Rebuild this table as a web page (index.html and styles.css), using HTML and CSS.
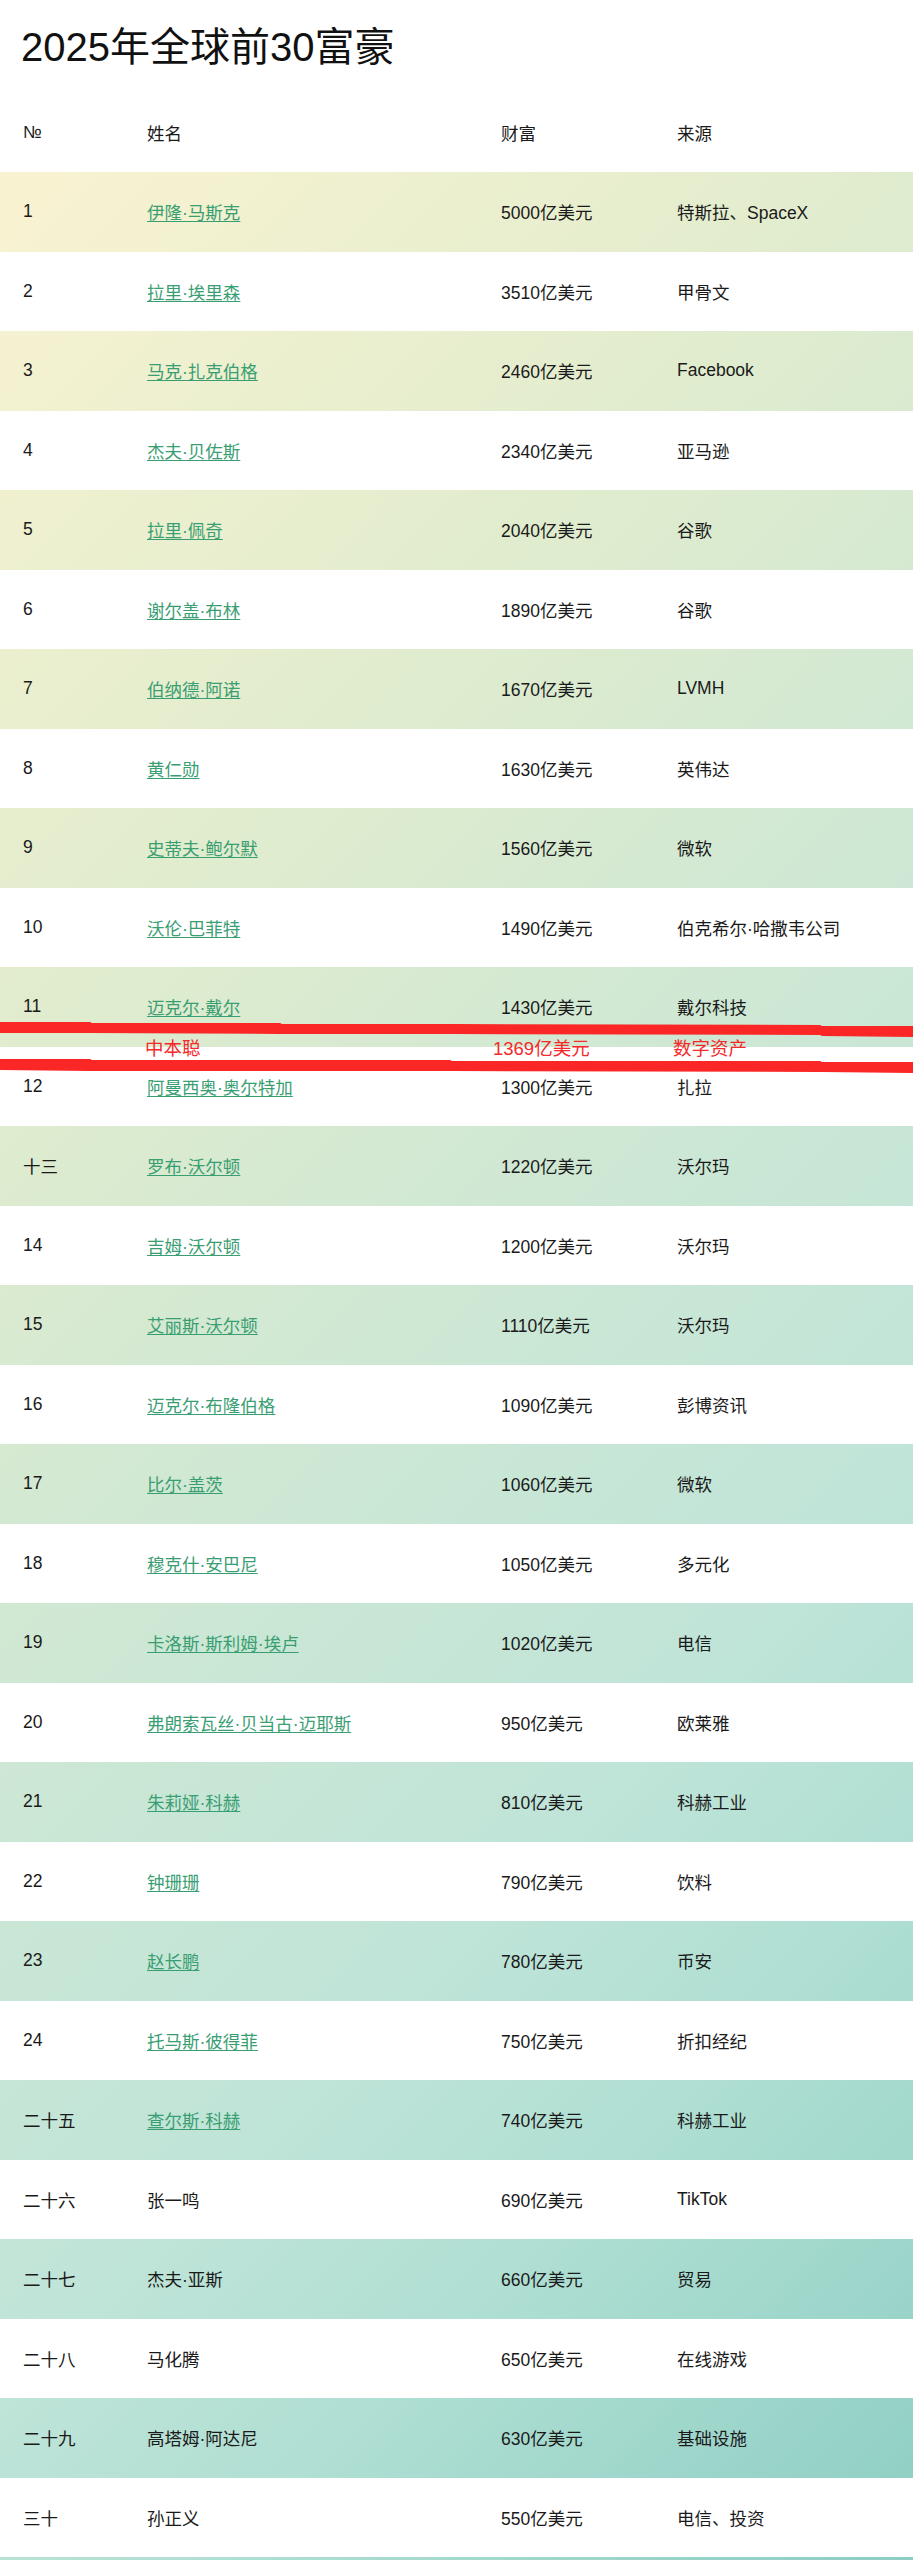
FILE: index.html
```html
<!DOCTYPE html>
<html lang="zh-CN">
<head>
<meta charset="utf-8">
<title>2025年全球前30富豪</title>
<link rel="stylesheet" href="styles.css">
</head>
<body>
<h1 class="title">2025年全球前30富豪</h1>
<div class="table">
  <div class="row head"><span>№</span><span>姓名</span><span>财富</span><span>来源</span></div>
  <div class="row odd"><span>1</span><span><a href="#">伊隆·马斯克</a></span><span>5000亿美元</span><span>特斯拉、SpaceX</span></div>
  <div class="row"><span>2</span><span><a href="#">拉里·埃里森</a></span><span>3510亿美元</span><span>甲骨文</span></div>
  <div class="row odd"><span>3</span><span><a href="#">马克·扎克伯格</a></span><span>2460亿美元</span><span>Facebook</span></div>
  <div class="row"><span>4</span><span><a href="#">杰夫·贝佐斯</a></span><span>2340亿美元</span><span>亚马逊</span></div>
  <div class="row odd"><span>5</span><span><a href="#">拉里·佩奇</a></span><span>2040亿美元</span><span>谷歌</span></div>
  <div class="row"><span>6</span><span><a href="#">谢尔盖·布林</a></span><span>1890亿美元</span><span>谷歌</span></div>
  <div class="row odd"><span>7</span><span><a href="#">伯纳德·阿诺</a></span><span>1670亿美元</span><span>LVMH</span></div>
  <div class="row"><span>8</span><span><a href="#">黄仁勋</a></span><span>1630亿美元</span><span>英伟达</span></div>
  <div class="row odd"><span>9</span><span><a href="#">史蒂夫·鲍尔默</a></span><span>1560亿美元</span><span>微软</span></div>
  <div class="row"><span>10</span><span><a href="#">沃伦·巴菲特</a></span><span>1490亿美元</span><span>伯克希尔·哈撒韦公司</span></div>
  <div class="row odd"><span>11</span><span><a href="#">迈克尔·戴尔</a></span><span>1430亿美元</span><span>戴尔科技</span></div>
  <div class="row"><span>12</span><span><a href="#">阿曼西奥·奥尔特加</a></span><span>1300亿美元</span><span>扎拉</span></div>
  <div class="row odd"><span>十三</span><span><a href="#">罗布·沃尔顿</a></span><span>1220亿美元</span><span>沃尔玛</span></div>
  <div class="row"><span>14</span><span><a href="#">吉姆·沃尔顿</a></span><span>1200亿美元</span><span>沃尔玛</span></div>
  <div class="row odd"><span>15</span><span><a href="#">艾丽斯·沃尔顿</a></span><span>1110亿美元</span><span>沃尔玛</span></div>
  <div class="row"><span>16</span><span><a href="#">迈克尔·布隆伯格</a></span><span>1090亿美元</span><span>彭博资讯</span></div>
  <div class="row odd"><span>17</span><span><a href="#">比尔·盖茨</a></span><span>1060亿美元</span><span>微软</span></div>
  <div class="row"><span>18</span><span><a href="#">穆克什·安巴尼</a></span><span>1050亿美元</span><span>多元化</span></div>
  <div class="row odd"><span>19</span><span><a href="#">卡洛斯·斯利姆·埃卢</a></span><span>1020亿美元</span><span>电信</span></div>
  <div class="row"><span>20</span><span><a href="#">弗朗索瓦丝·贝当古·迈耶斯</a></span><span>950亿美元</span><span>欧莱雅</span></div>
  <div class="row odd"><span>21</span><span><a href="#">朱莉娅·科赫</a></span><span>810亿美元</span><span>科赫工业</span></div>
  <div class="row"><span>22</span><span><a href="#">钟珊珊</a></span><span>790亿美元</span><span>饮料</span></div>
  <div class="row odd"><span>23</span><span><a href="#">赵长鹏</a></span><span>780亿美元</span><span>币安</span></div>
  <div class="row"><span>24</span><span><a href="#">托马斯·彼得菲</a></span><span>750亿美元</span><span>折扣经纪</span></div>
  <div class="row odd"><span>二十五</span><span><a href="#">查尔斯·科赫</a></span><span>740亿美元</span><span>科赫工业</span></div>
  <div class="row"><span>二十六</span><span>张一鸣</span><span>690亿美元</span><span>TikTok</span></div>
  <div class="row odd"><span>二十七</span><span>杰夫·亚斯</span><span>660亿美元</span><span>贸易</span></div>
  <div class="row"><span>二十八</span><span>马化腾</span><span>650亿美元</span><span>在线游戏</span></div>
  <div class="row odd"><span>二十九</span><span>高塔姆·阿达尼</span><span>630亿美元</span><span>基础设施</span></div>
  <div class="row"><span>三十</span><span>孙正义</span><span>550亿美元</span><span>电信、投资</span></div>
</div>

<div class="mark">
  <svg class="mark-lines" width="913" height="70" viewBox="0 0 913 70" aria-hidden="true">
    <polygon fill="#fb2626" points="0,7 90,7 92,8 280,8 282,9 450,9 452,9 820,10 822,11 913,11 913,22 822,21 820,20 452,19 280,19 90,18 0,18"/>
    <polygon fill="#fb2626" points="0,44 90,44 92,45 280,45 282,45 450,45 452,46 820,46 822,47 913,47 913,58 822,57 820,57 452,56 280,56 90,56 0,55"/>
  </svg>
  <span class="m-name">中本聪</span>
  <span class="m-w">1369亿美元</span>
  <span class="m-src">数字资产</span>
</div>
</body>
</html>
```

FILE: styles.css
```css
html, body {
  margin: 0;
  padding: 0;
  background: #ffffff;
}

body {
  position: relative;
  width: 913px;
  font-family: "Liberation Sans", "Noto Sans CJK SC", sans-serif;
  color: #1a1a1a;
}

.title {
  margin: 23px 0 0 21px;
  font-size: 40px;
  line-height: 48px;
  font-weight: normal;
  color: #111;
  font-family: "Liberation Sans", "Noto Sans CJK SC", sans-serif;
}

.table {
  margin-top: 21.5px;
  padding-bottom: 24px;
  background: linear-gradient(135deg,
    #fcf3d2 0%,
    #eef0cf 14%,
    #e0ecce 29%,
    #d4e9d2 42%,
    #cbe7d5 52%,
    #bfe4d8 68%,
    #b0dfd3 79%,
    #8ccdc3 100%);
}

.row {
  display: grid;
  grid-template-columns: 124px 354px 176px 1fr;
  align-items: center;
  height: 79.5px;
  padding-left: 23px;
  font-size: 17.5px;
  background: #ffffff;
}

.row.odd {
  background: transparent;
}

.row.head {
  background: #ffffff;
}

.row a {
  color: #3a9e73;
  text-decoration: underline;
  text-underline-offset: 2px;
}

.mark {
  position: absolute;
  left: 0;
  top: 1015px;
  width: 913px;
  height: 70px;
}

.mark-lines {
  position: absolute;
  left: 0;
  top: 0;
  display: block;
}

.mark span {
  position: absolute;
  top: 22px;
  line-height: 24px;
  font-size: 18.5px;
  color: #f42a2a;
}

.m-name { left: 145px; }
.m-w { left: 493px; }
.m-src { left: 673px; }
```
